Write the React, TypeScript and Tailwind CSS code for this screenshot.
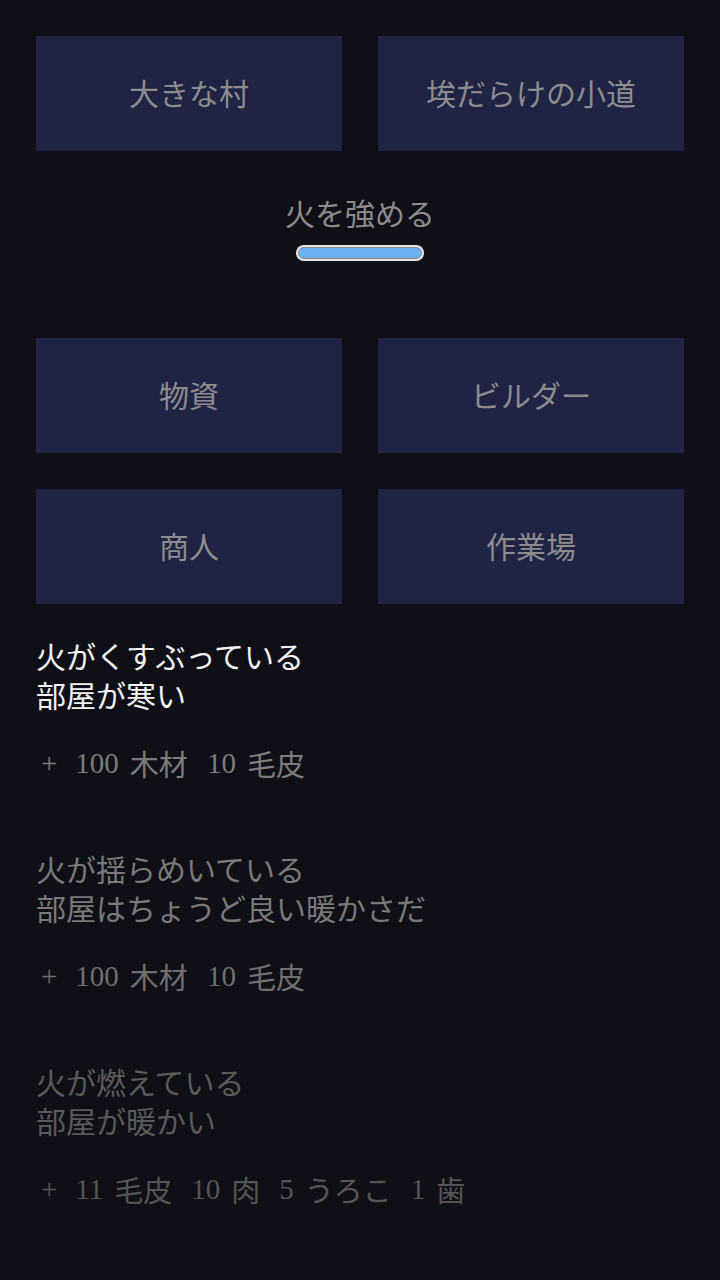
import React from "react";

const JP = { fontFamily: '"Noto Sans CJK JP", "Noto Sans", sans-serif' };
const MIX = { fontFamily: '"Liberation Serif", "Noto Sans CJK JP", serif' };

function Tile({ label }: { label: string }) {
  return (
    <button className="h-[115px] bg-[#1f2344] text-[#8c8c8c] text-[30px] leading-none pb-[3px] flex items-center justify-center" style={JP}>
      {label}
    </button>
  );
}

interface Entry {
  lines: string[];
  items: [string, string][];
  text: string;
  res: string;
}

const entries: Entry[] = [
  {
    lines: ["火がくすぶっている", "部屋が寒い"],
    items: [["100", "木材"], ["10", "毛皮"]],
    text: "text-[#f2f2f2]",
    res: "text-[#7c7c7c]",
  },
  {
    lines: ["火が揺らめいている", "部屋はちょうど良い暖かさだ"],
    items: [["100", "木材"], ["10", "毛皮"]],
    text: "text-[#7a7a7a]",
    res: "text-[#707070]",
  },
  {
    lines: ["火が燃えている", "部屋が暖かい"],
    items: [["11", "毛皮"], ["10", "肉"], ["5", "うろこ"], ["1", "歯"]],
    text: "text-[#5a5a5a]",
    res: "text-[#555555]",
  },
];

export default function App() {
  return (
    <div className="min-h-[1280px] w-[720px] bg-[#0e0f17] px-[36px] pt-[36px]">
      <div className="grid grid-cols-2 gap-[36px]">
        <Tile label="大きな村" />
        <Tile label="埃だらけの小道" />
      </div>

      <div className="flex flex-col items-center mt-[42px]">
        <div className="text-[30px] leading-[39px] text-[#8c8c8c]" style={JP}>火を強める</div>
        <div className="mt-[13px] w-[128px] h-[16px] rounded-full bg-[#e6e6e6] p-[2px]">
          <div className="h-full w-full rounded-full bg-[#6cb2f2] border border-[#8a8a8a]" />
        </div>
      </div>

      <div className="grid grid-cols-2 gap-[36px] mt-[77px]">
        <Tile label="物資" />
        <Tile label="ビルダー" />
        <Tile label="商人" />
        <Tile label="作業場" />
      </div>

      <div className="mt-[32px] flex flex-col gap-[66px]">
        {entries.map((e, i) => (
          <div key={i} className="flex flex-col">
            <div className={`text-[30px] leading-[39px] ${e.text}`} style={JP}>
              {e.lines.map((l) => (
                <div key={l}>{l}</div>
              ))}
            </div>
            <div className={`mt-[30px] flex items-center h-[39px] text-[29px] ${e.res}`} style={MIX}>
              <span className="ml-[5px] mr-[18px]">+</span>
              <div className="flex gap-[19px]">
                {e.items.map(([n, name]) => (
                  <span key={name} className="flex gap-[11px]">
                    <span>{n}</span>
                    <span style={JP}>{name}</span>
                  </span>
                ))}
              </div>
            </div>
          </div>
        ))}
      </div>
    </div>
  );
}
